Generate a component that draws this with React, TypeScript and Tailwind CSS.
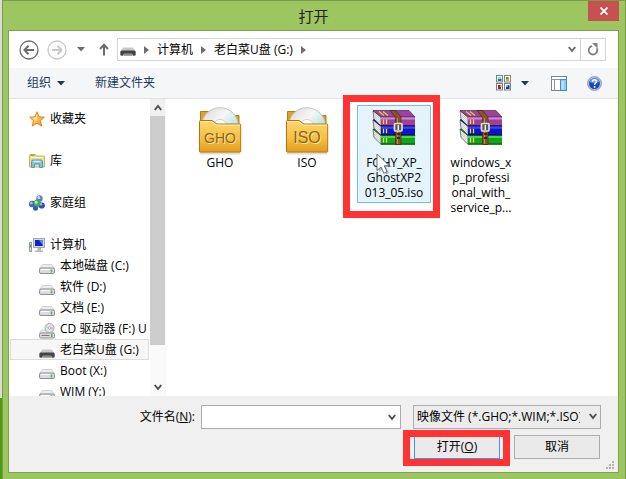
import React, { useState } from 'react';

type IconProps = { className?: string };

function Triangle({ className }: IconProps) {
  return (
    <svg className={className} width="8" height="5" viewBox="0 0 8 5" fill="currentColor">
      <path d="M0 0h8L4 4.5z" />
    </svg>
  );
}

function CrumbArrow() {
  return (
    <svg width="5" height="8" viewBox="0 0 5 8" fill="#6d6d6d">
      <path d="M0 0l5 4-5 4z" />
    </svg>
  );
}

function Chevron({ className }: IconProps) {
  return (
    <svg className={className} width="8" height="7" viewBox="0 0 8 7" fill="none" stroke="currentColor" strokeWidth="2">
      <path d="M.8 1L4 5l3.200-4" />
    </svg>
  );
}

function CircleArrow({ flip }: { flip?: boolean }) {
  return (
    <svg
      className={flip ? 'rotate-180 text-[#c8c8c8]' : 'text-[#6b6b6b]'}
      width="20"
      height="20"
      viewBox="0 0 20 20"
      fill="none"
      stroke="currentColor"
    >
      <circle cx="10" cy="10" r="9" strokeWidth="1.300" />
      <path d="M5.500 10h9.500M9.500 5.800L5.500 10l4 4.200" strokeWidth="2" />
    </svg>
  );
}

function UpArrow() {
  return (
    <svg width="10" height="13" viewBox="0 0 10 13" fill="none" stroke="#6b6b6b" strokeWidth="2">
      <path d="M5 12.500V2M1 6l4-4.300L9 6" />
    </svg>
  );
}

function RefreshIcon() {
  return (
    <svg width="12" height="13" viewBox="0 0 12 13">
      <path d="M9.800 5.200A4.300 4.300 0 1 1 5 3" fill="none" stroke="#808080" strokeWidth="1.800" />
      <path d="M5 0h5.500v5.500z" fill="#808080" />
    </svg>
  );
}

function StarIcon() {
  return (
    <svg width="16" height="16" viewBox="0 0 16 16">
      <defs>
        <linearGradient id="star" x1="0" y1="0" x2="1" y2="1">
          <stop offset="0" stopColor="#ffe9a0" />
          <stop offset=".5" stopColor="#fdc04a" />
          <stop offset="1" stopColor="#f08a20" />
        </linearGradient>
      </defs>
      <path
        d="M8 .8l2 5 5.400.4-4.100 3.500 1.600 5.500L8 12.200l-4.900 3 1.500-5.500L.6 6.200 6 5.800z"
        fill="url(#star)"
        stroke="#e0812a"
        strokeWidth="1"
        strokeLinejoin="round"
      />
      <path d="M8 3v6.500L5.600 11l.7-2.300-2.800-2 3.200-.2z" fill="#fff3b8" opacity=".7" />
    </svg>
  );
}

function LibraryIcon() {
  return (
    <svg width="16" height="16" viewBox="0 0 16 16">
      <path d="M.5 14V2.500Q.5 1.500 1.500 1.500h5l1 1.500h8v11z" fill="#f3dc8c" stroke="#d2b45c" />
      <path d="M1.500 2h4" stroke="#5fb84a" strokeWidth="1.500" />
      <path d="M1.500 4.500h13" stroke="#fff6cf" />
      <path
        d="M2.500 14.500V8.500q0-1.500 1.500-1.500h8q1.500 0 1.500 1.500v6h-3V11h-5v3.500z"
        fill="#7cc4e6"
        stroke="#4b9ccc"
      />
      <path d="M4.500 8.500h7" stroke="#d4effc" strokeWidth="1.500" />
    </svg>
  );
}

function HomegroupIcon() {
  return (
    <svg width="16" height="16" viewBox="0 0 16 16">
      <path d="M3 9l6-5M9 4l4 7M3 10l9 2" stroke="#8a97ad" strokeWidth="2" />
      <circle cx="10.500" cy="3.500" r="3.200" fill="#5b7fd0" />
      <circle cx="9.800" cy="2.500" r="1.500" fill="#c9dcfa" />
      <circle cx="3.200" cy="9" r="3.200" fill="#3a60c6" />
      <circle cx="2.300" cy="7.900" r="1.500" fill="#9fbcf5" />
      <circle cx="12.800" cy="10.500" r="3.100" fill="#2b50bb" />
      <circle cx="12" cy="9.300" r="1.200" fill="#9fbcf5" />
      <circle cx="6.500" cy="13.300" r="2.500" fill="#3159c0" />
      <circle cx="8" cy="8.300" r="3.300" fill="#42ac4e" />
      <circle cx="7.200" cy="7.200" r="1.500" fill="#b4ecb0" />
    </svg>
  );
}

function ComputerIcon() {
  return (
    <svg width="16" height="16" viewBox="0 0 16 16">
      <rect x=".5" y="5.500" width="2" height="9" fill="#d8dce0" stroke="#9aa0a6" />
      <path d="M1.500 7.500v3" stroke="#43b52f" strokeWidth="1.500" />
      <rect x="4.500" y="1.500" width="11" height="9" fill="#d5dae2" stroke="#a3a9b3" />
      <rect x="6" y="3" width="8" height="6" fill="#0b25c8" />
      <path d="M10 3h4v6z" fill="#5d80ee" />
      <path d="M8.500 11h3.500v2.500h2V15H6v-1.500h2.500z" fill="#b4bac2" />
    </svg>
  );
}

function DriveIcon() {
  return (
    <svg width="16" height="16" viewBox="0 0 16 16">
      <path d="M3.500 4.500h9l3 4H.5z" fill="#ececee" stroke="#c9c9cc" strokeWidth=".8" />
      <rect x=".5" y="8" width="15" height="5.500" rx="1.500" fill="#dcdce0" stroke="#8e8e95" />
      <path d="M2 9.500h9" stroke="#fafafc" />
      <path d="M12.500 9.500v3" stroke="#4fbb42" strokeWidth="1.600" />
    </svg>
  );
}

function CdDriveIcon() {
  return (
    <svg width="16" height="16" viewBox="0 0 16 16">
      <path d="M2.500 7h8l5 3H.5z" fill="#ececee" stroke="#c9c9cc" strokeWidth=".8" />
      <rect x=".5" y="10" width="15" height="5" rx="1.500" fill="#dcdce0" stroke="#8e8e95" />
      <path d="M2.500 12.500h8" stroke="#77777c" />
      <path d="M12.800 11v3" stroke="#4fbb42" strokeWidth="1.600" />
      <circle cx="10.500" cy="5" r="4.500" fill="#e4e6ea" stroke="#a4a6ae" />
      <path d="M10.500 5L8 1.500A4.300 4.300 0 0 0 6.300 5z" fill="#bfe3c4" />
      <path d="M10.500 5l3.800 2a4.300 4.300 0 0 0 .2-3.500z" fill="#d7b7dd" />
      <circle cx="10.500" cy="5" r="1.300" fill="#fff" stroke="#9a9ca4" strokeWidth=".7" />
    </svg>
  );
}

function UsbDriveIcon() {
  return (
    <svg width="16" height="16" viewBox="0 0 16 16">
      <path d="M3.500 5.500h9L15.500 9H.5z" fill="#c8c8ca" />
      <path
        d="M.3 10q0-1.500 1.500-1.500h12.400q1.500 0 1.500 1.500v2.200q0 1.500-1.500 1.500h-1L12 11.700H4l-1.200 2h-1q-1.500 0-1.500-1.500z"
        fill="#444446"
      />
      <path d="M4 12h8l.8 1.700H3.200z" fill="#8a8a8c" />
    </svg>
  );
}

function ViewIcon() {
  return (
    <svg width="15" height="16" viewBox="0 0 15 16">
      <g fill="#fff" stroke="#77808f">
        <rect x=".5" y=".5" width="6" height="6.500" />
        <rect x="8.500" y=".5" width="6" height="6.500" />
        <rect x=".5" y="8.500" width="6" height="6.500" />
        <rect x="8.500" y="8.500" width="6" height="6.500" />
      </g>
      <path d="M2 4h3.500v2H2z" fill="#147a58" />
      <path d="M2 2h3v2H2z" fill="#8ed8ee" />
      <path d="M10 2h3v4h-3z" fill="#e6a424" />
      <path d="M10 2h2v2h-2z" fill="#36a33a" />
      <path d="M2 10h3v4H2z" fill="#b71c18" />
      <path d="M4 10h1.500v2H4z" fill="#f08a20" />
      <path d="M10 10h3.500v4H10z" fill="#1d3d84" />
      <path d="M10 10h2v2h-2z" fill="#75b4ef" />
    </svg>
  );
}

function PreviewIcon() {
  return (
    <svg width="16" height="15" viewBox="0 0 16 15">
      <rect x=".5" y=".5" width="15" height="14" fill="#fff" stroke="#7d848d" />
      <path d="M0 3.500h16M3.500 3.500v11" stroke="#8b929b" />
      <rect x="9.500" y="3.500" width="6" height="11" fill="#8fcbf7" stroke="#3a8fd8" />
      <path d="M11.500 5v8" stroke="#c3e6fe" strokeWidth="2" />
    </svg>
  );
}

function HelpIcon() {
  return (
    <svg width="15" height="15" viewBox="0 0 15 15">
      <circle cx="7.500" cy="7.500" r="6.900" fill="#c6cede" stroke="#8792a6" />
      <circle cx="7.500" cy="7.500" r="5.500" fill="#1d45bd" />
      <path d="M2.500 6a5.200 5.200 0 0 1 10 0q-5 2-10 0z" fill="#6f95ea" />
      <path d="M5.500 5.700q0-2 2-2t2 1.800q0 1-1 1.600T7.600 9" fill="none" stroke="#fff" strokeWidth="1.500" />
      <circle cx="7.600" cy="11" r=".9" fill="#fff" />
    </svg>
  );
}

function FolderIcon({ text, size }: { text: string; size: number }) {
  return (
    <svg width="48" height="48" viewBox="0 0 48 48">
      <defs>
        <linearGradient id="folder" x1="0" y1="0" x2="0" y2="1">
          <stop offset="0" stopColor="#fcd76f" />
          <stop offset=".6" stopColor="#f3bd42" />
          <stop offset="1" stopColor="#e09c18" />
        </linearGradient>
        <linearGradient id="disc" x1="0" y1="0" x2="1" y2="1">
          <stop offset="0" stopColor="#d6d6d8" />
          <stop offset=".4" stopColor="#f6f6f6" />
          <stop offset=".65" stopColor="#bfe9e6" />
          <stop offset="1" stopColor="#dadadc" />
        </linearGradient>
      </defs>
      <path d="M4 46.500h40" stroke="#dcdcdc" strokeWidth="2" />
      <path d="M4.500 20V4.500h14l3 4H43V20z" fill="#dda028" stroke="#b07a14" />
      <circle cx="24" cy="19" r="18.300" fill="url(#disc)" stroke="#c4c4c6" />
      <circle cx="24" cy="19" r="6.500" fill="#fff" stroke="#cfcfd1" />
      <path
        d="M3.500 14.500q0-1 1-1h11.500l5 3.500H44q.7 0 .7 1v26.500q0 .6-.7.6H4.200q-.7 0-.7-.6z"
        fill="url(#folder)"
        stroke="#b07410"
      />
      <path d="M4.500 14.700h11l5 3.500H44" fill="none" stroke="#ffebaa" />
      <g fontFamily="Liberation Sans, sans-serif" fontSize={size} textAnchor="middle">
        <text x="25" y="37" fill="#ffe6a0">{text}</text>
        <text x="24" y="36" fill="#91610e">{text}</text>
      </g>
    </svg>
  );
}

function Book({ y, dark, color, light }: { y: number; dark: string; color: string; light: string }) {
  return (
    <g transform={`translate(0 ${y})`}>
      <path d="M0 .8l8 6.500v8.500L1 9z" fill="#f6f6f6" stroke="#222" strokeWidth=".6" />
      <path d="M1 3.500l7 6M1 5.500l7 6M1 7.500l7 6" stroke="#9a9a9a" strokeWidth=".5" />
      <path d="M0 .5h36l6 6.500H8z" fill={color} stroke={dark} strokeWidth=".6" />
      <path d="M8 7h34v9H8z" fill={color} />
      <path d="M8 8.500h34" stroke={light} strokeWidth="2" />
      <path d="M8 15.600h34" stroke={dark} />
      <path d="M10.500 9.500v4.500M13.500 9.500v4.500" stroke="#f0e13c" strokeWidth="1.300" />
    </g>
  );
}

function RarIcon() {
  return (
    <svg width="48" height="48" viewBox="-3 -3 48 48">
      <Book y={18.5} dark="#033c03" color="#12a51a" light="#3fdd42" />
      <Book y={9.2} dark="#03033c" color="#0c14cc" light="#3c46f0" />
      <Book y={0} dark="#3c0d3c" color="#99449a" light="#cf86cd" />
      <path d="M6 1.500l5 4M10 1.500l5 4" stroke="#e4d33f" strokeWidth="1.200" />
      <path d="M17 .5h5.500L28 7v27.500h-5.500V7.500z" fill="#8a5228" stroke="#402008" strokeWidth=".6" />
      <path d="M24.500 8v26" stroke="#bd8a55" />
      <rect x="21.500" y="13.500" width="7.500" height="7.500" rx="1" fill="#555" stroke="#e3e0d4" strokeWidth="1.700" />
      <path d="M25.300 15v5" stroke="#f3efe2" strokeWidth="1.500" />
      <path d="M24 24h3M24 28h3" stroke="#2b1504" strokeWidth="1.300" />
    </svg>
  );
}

function Cursor() {
  return (
    <svg className="absolute top-[47px] left-[18px]" width="17" height="22" viewBox="0 0 17 22">
      <path d="M3 3v16l4-3.500 3 6 3-1.500-2.800-6H16z" fill="#000" opacity=".25" />
      <path d="M1 1v16.500l4-3.600 2.800 6.300 3.200-1.500-2.800-5.900h5.300z" fill="#fff" stroke="#56616c" strokeWidth=".9" />
    </svg>
  );
}

const places = [
  { name: '收藏夹', icon: <StarIcon /> },
  { name: '库', icon: <LibraryIcon /> },
  { name: '家庭组', icon: <HomegroupIcon /> },
  { name: '计算机', icon: <ComputerIcon /> },
];

const drives = [
  { name: '本地磁盘 (C:)', icon: <DriveIcon /> },
  { name: '软件 (D:)', icon: <DriveIcon /> },
  { name: '文档 (E:)', icon: <DriveIcon /> },
  { name: 'CD 驱动器 (F:) U', icon: <CdDriveIcon /> },
  { name: '老白菜U盘 (G:)', icon: <UsbDriveIcon /> },
  { name: 'Boot (X:)', icon: <DriveIcon /> },
  { name: 'WIM (Y:)', icon: <DriveIcon /> },
];

const files = [
  { lines: ['GHO'], icon: <FolderIcon text="GHO" size={14} /> },
  { lines: ['ISO'], icon: <FolderIcon text="ISO" size={16} /> },
  { lines: ['FOHY_XP_', 'GhostXP2', '013_05.iso'], icon: <RarIcon /> },
  { lines: ['windows_x', 'p_professi', 'onal_with_', 'service_p...'], icon: <RarIcon /> },
];

function AddressRow() {
  return (
    <div className="flex items-center bg-white py-[7px] pr-3 pl-2.5">
      <button aria-label="后退">
        <CircleArrow />
      </button>
      <button aria-label="前进" className="ml-2">
        <CircleArrow flip />
      </button>
      <button aria-label="最近浏览的位置" className="ml-2.5 text-[#6d6d6d]">
        <Triangle />
      </button>
      <button aria-label="上移" className="ml-3.5">
        <UpArrow />
      </button>
      <div className="ml-2 flex h-[23px] min-w-0 flex-1 items-center border border-[#d4d4d4] pl-0.5">
        <UsbDriveIcon />
        <div className="ml-2 flex items-center gap-2 whitespace-nowrap">
          <CrumbArrow />
          <button>计算机</button>
          <CrumbArrow />
          <button>老白菜U盘 (G:)</button>
          <CrumbArrow />
        </div>
        <button aria-label="以前的位置" className="mr-1 ml-auto text-[#6d6d6d]">
          <Chevron />
        </button>
        <button aria-label="刷新" className="flex h-full w-[25px] items-center justify-center border-l border-[#d4d4d4]">
          <RefreshIcon />
        </button>
      </div>
    </div>
  );
}

function Toolbar() {
  return (
    <div className="flex h-[31px] items-center border-b border-[#e0e2e6] bg-[#f5f6f8] pr-4 pl-[18px] text-[#1e395b]">
      <button className="flex items-center gap-1.5">
        组织 <Triangle />
      </button>
      <button className="ml-[30px]">新建文件夹</button>
      <button aria-label="更改视图" className="ml-auto flex items-center gap-2.5">
        <ViewIcon />
        <Triangle />
      </button>
      <button aria-label="预览窗格" className="ml-[22px]">
        <PreviewIcon />
      </button>
      <button aria-label="帮助" className="ml-5">
        <HelpIcon />
      </button>
    </div>
  );
}

function Sidebar() {
  return (
    <div className="flex w-[157px] shrink-0">
      <nav className="min-w-0 flex-1 overflow-hidden pt-[9px]">
        <ul className="flex flex-col gap-[21px]">
          {places.map((place) => (
            <li key={place.name}>
              <button className="flex h-[21px] items-center gap-[5px] pl-5">
                {place.icon}
                {place.name}
              </button>
            </li>
          ))}
        </ul>
        <ul className="px-px">
          {drives.map((drive) => (
            <li key={drive.name}>
              <button
                className={`flex h-[21px] w-full items-center gap-[5px] whitespace-nowrap border pl-7 ${
                  drive.name.includes('G:') ? 'border-[#dcdcdc] bg-[#f7f7f7]' : 'border-transparent'
                }`}
              >
                <span className="shrink-0 pt-1">{drive.icon}</span>
                {drive.name}
              </button>
            </li>
          ))}
        </ul>
      </nav>
      <div className="flex w-4 flex-col border-r border-[#f7f7f7] bg-[#fafafa] text-[#505050]">
        <button aria-label="向上滚动" className="flex h-[17px] items-center justify-center bg-[#f0f0f0]">
          <Chevron className="rotate-180" />
        </button>
        <div className="flex-1">
          <div className="h-[87%] bg-[#cdcdcd]" />
        </div>
        <button aria-label="向下滚动" className="flex h-[17px] items-center justify-center">
          <Chevron />
        </button>
      </div>
    </div>
  );
}

function FileList() {
  return (
    <div className="flex flex-1 flex-wrap items-start gap-[13px] pt-1.5 pl-[17px]">
      {files.map((file, i) => (
        <button
          key={file.lines[0]}
          className={`relative flex w-[74px] flex-col items-center border pt-px pb-0.5 ${
            i === 2 ? 'border-[#70c0e7] bg-[#e5f3fb]' : 'border-transparent'
          }`}
        >
          {file.icon}
          <span className="leading-[15px]">
            {file.lines.map((line) => (
              <span key={line} className="block">
                {line}
              </span>
            ))}
          </span>
          {i === 2 && (
            <>
              <Cursor />
              <span className="absolute -top-[11px] -right-2.5 -bottom-4 -left-[15px] border-7 border-[#ff3333]" />
            </>
          )}
        </button>
      ))}
    </div>
  );
}

function Footer() {
  const [fileName, setFileName] = useState('');

  return (
    <div className="flex h-[76px] flex-col gap-1.5 bg-[#f0f0f0] pt-[9px] pr-[17px]">
      <div className="flex h-6 items-center">
        <label htmlFor="fileName" className="w-48 pr-1.5 text-right">
          文件名(<u>N</u>):
        </label>
        <div className="flex h-6 flex-1 items-center border border-[#acacac] bg-white pr-1">
          <input
            id="fileName"
            value={fileName}
            onChange={(e) => setFileName(e.target.value)}
            className="h-full min-w-0 flex-1 px-1 outline-none"
          />
          <button aria-label="文件名列表" className="text-[#505050]">
            <Chevron />
          </button>
        </div>
        <div className="relative ml-3 w-[188px]">
          <select
            aria-label="文件类型"
            className="h-6 w-full appearance-none overflow-hidden border border-[#acacac] bg-[#ececec] pr-5 pl-[3px] text-black"
          >
            <option>映像文件 (*.GHO;*.WIM;*.ISO)</option>
          </select>
          <Chevron className="pointer-events-none absolute top-2 right-1 text-[#505050]" />
        </div>
      </div>
      <div className="flex justify-end gap-3.5 pr-px">
        <button className="relative h-6 w-[86px] border border-[#3399ff] bg-[#eaeaea]">
          打开(<u>O</u>)
          <span className="absolute -top-1.5 -right-[11px] -bottom-2 -left-3 border-7 border-[#ff3333]" />
        </button>
        <button className="h-6 w-[86px] border border-[#acacac] bg-[#eaeaea]">取消</button>
      </div>
      <svg className="-mt-1 -mr-3.5 self-end" width="9" height="9" viewBox="0 0 9 9" fill="#b4b4b4">
        <path d="M6 0h2v2H6zM3 3h2v2H3zM6 3h2v2H6zM0 6h2v2H0zM3 6h2v2H3zM6 6h2v2H6z" />
      </svg>
    </div>
  );
}

export default function App() {
  return (
    <div className="flex h-screen bg-[#9dc661] font-['Open_Sans','Noto_Sans_CJK_SC',sans-serif] text-xs text-black">
      <div className="flex w-0.5 flex-col">
        <div className="flex-1 bg-[#d9dcd6]" />
        <div className="h-[81px] bg-[#4f9a14]" />
      </div>
      <div className="flex min-w-0 flex-1 flex-col border-x border-t border-[#7a9c48] pr-1.5 pb-1.5 pl-[5px]">
        <header className="relative flex h-[29px] items-center justify-center text-[15px] text-[#222]">
          <h1>打开</h1>
          <button
            aria-label="关闭"
            className="absolute top-0 right-0 flex h-5 w-[31px] items-center justify-center bg-[#c75050]"
          >
            <svg width="8" height="8" viewBox="0 0 8 8" stroke="#fff" strokeWidth="1.800">
              <path d="M.5.5l7 7M7.500.5l-7 7" />
            </svg>
          </button>
        </header>
        <main className="flex min-h-0 flex-1 flex-col border border-[#7fa34c]">
          <AddressRow />
          <Toolbar />
          <div className="flex min-h-0 flex-1 bg-white">
            <Sidebar />
            <FileList />
          </div>
          <Footer />
        </main>
      </div>
    </div>
  );
}
